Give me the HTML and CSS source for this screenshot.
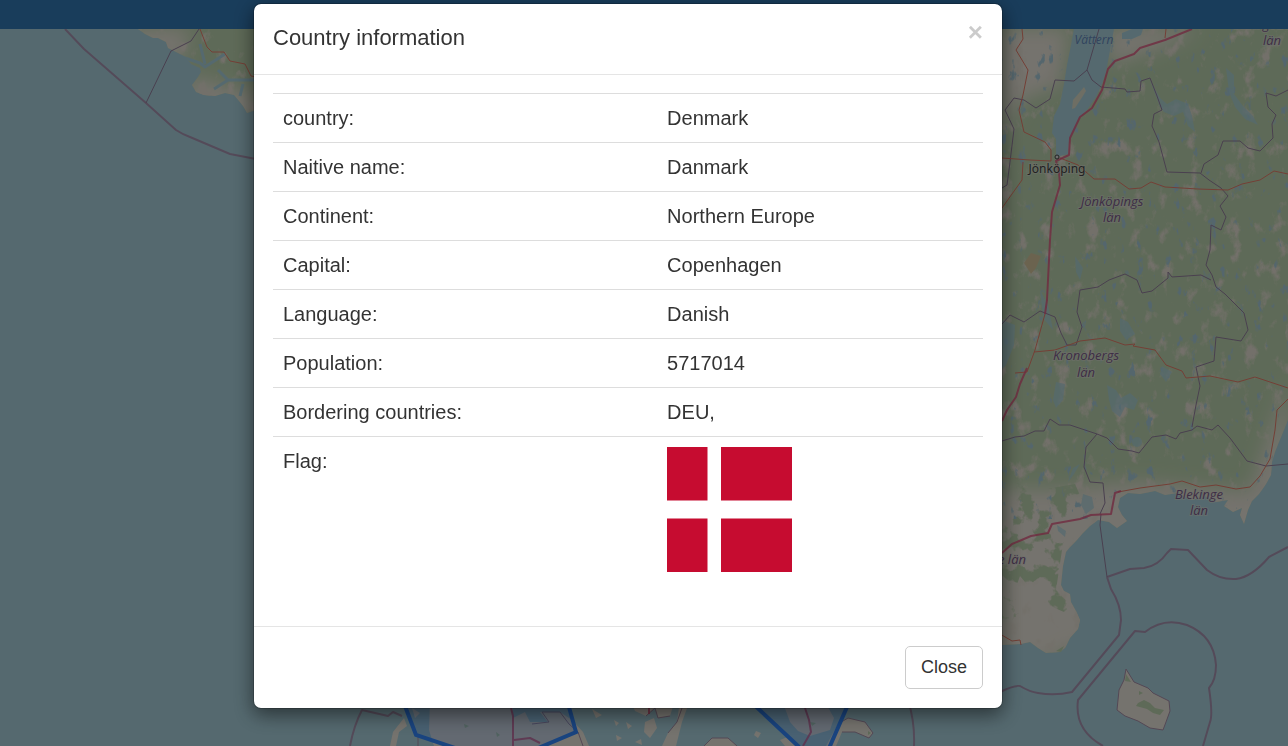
FILE: index.html
```html
<!DOCTYPE html>
<html lang="en">
<head>
<meta charset="utf-8">
<meta name="viewport" content="width=device-width, initial-scale=1">
<title>Country information</title>
<link rel="stylesheet" href="styles.css">
</head>
<body>
<header class="navbar"></header>
<main class="map">
<svg class="map-canvas" viewBox="0 29 1288 717" preserveAspectRatio="xMinYMin slice" aria-hidden="true">
  <defs>
    <filter id="fields" x="0" y="0" width="100%" height="100%" color-interpolation-filters="sRGB">
      <feTurbulence type="fractalNoise" baseFrequency="0.07 0.05" numOctaves="5" seed="4"/>
      <feColorMatrix values="0 0 0 0 .9  0 0 0 0 .88  0 0 0 0 .83  5 0 0 0 -2.9"/>
    </filter>
    <filter id="woods" x="0" y="0" width="100%" height="100%" color-interpolation-filters="sRGB">
      <feTurbulence type="fractalNoise" baseFrequency="0.06" numOctaves="4" seed="11"/>
      <feColorMatrix values="0 0 0 0 .74  0 0 0 0 .83  0 0 0 0 .69  10 0 0 0 -5"/>
    </filter>
    <filter id="lakes" x="0" y="0" width="100%" height="100%" color-interpolation-filters="sRGB">
      <feTurbulence type="fractalNoise" baseFrequency="0.11 0.06" numOctaves="4" seed="23"/>
      <feColorMatrix values="0 0 0 0 .66  0 0 0 0 .8  0 0 0 0 .86  9 0 0 0 -6.100"/>
    </filter>
    <filter id="soften" x="-20%" y="-20%" width="140%" height="140%"><feGaussianBlur stdDeviation="9"/></filter>
    <clipPath id="sweden"><path d="M1000 29H1288V420L1284 430 1279 442 1275 452 1272 462 1271 475 1266 484 1259 494 1252 501 1248 510 1244 524 1240 515 1242 508 1233 512 1224 506 1228 500 1216 502 1205 496 1192 500 1178 493 1165 495 1155 491 1140 494 1128 493 1120 498 1118 507 1122 515 1127 521 1117 528 1109 522 1098 520 1090 526 1083 533 1077 540 1070 547 1066 552 1063 566 1061 585 1064 591 1070 594 1071 602 1076 611 1080 620 1078 629 1070 638 1065 648 1060 652 1046 653 1038 648 1030 642 1021 644 1000 645Z"/></clipPath>
    <clipPath id="norway"><path d="M138 29L145 34 153 38 158 38 166 42 168 48 176 52 186 57 191 64 200 68 201 72 198 77 192 85 196 92 204 95 215 96 225 93 234 95 239 101 243 106 247 113 256 110V29Z"/></clipPath>
    <clipPath id="skane"><path d="M1000 478L1040 490 1075 484 1082 500 1070 520 1062 550 1056 590 1072 606 1064 612 1050 606 1043 590 1030 588 1020 576 1015 590 1020 620 1000 632Z"/></clipPath>
  </defs>

  <rect class="sea" width="1288" height="760"/>

  <g clip-path="url(#sweden)">
    <rect class="forest" x="1000" y="29" width="288" height="630"/>
    <g filter="url(#soften)" class="farmland">
      <path d="M1000 29H1068L1060 85 1020 100 1000 140ZM1108 29H1200L1170 45 1110 65Z"/>
      <path d="M1000 490L1060 490 1105 485 1140 482 1250 492 1288 380V560L1000 680Z"/>
    </g>
    <rect x="1000" y="29" width="288" height="630" filter="url(#fields)"/>
    <g clip-path="url(#skane)"><rect x="1000" y="470" width="90" height="170" filter="url(#woods)"/></g>
    <rect x="1000" y="29" width="288" height="490" filter="url(#lakes)"/>
    <g class="lake">
      <path d="M1074 29H1114L1111 45 1106 72 1102 84 1096 97 1087 110 1079 118 1073 130 1069 142 1068 154 1056 157 1056 139 1052 133 1054 116 1060 104 1064 84 1067 65 1071 45Z"/>
      <path d="M1122 33L1132 29H1143L1141 35 1132 39 1122 39Z"/>
    </g>
    <g class="lake lake-faint">
      <path d="M1150 80L1160 98 1167 104 1176 99 1188 104 1192 116 1195 132 1188 126 1183 112 1174 116 1164 112 1160 107Z"/>
      <path d="M1226 68L1234 75 1234 94 1243 106 1253 116 1258 125 1245 119 1235 107 1229 92Z"/>
      <path d="M1107 385L1116 390 1121 398 1130 393 1138 400 1134 410 1125 407 1120 417 1112 411 1109 400ZM1162 366L1172 372 1166 382 1160 374ZM1120 318L1128 322 1135 334 1126 340 1120 331ZM1002 320L1015 325 1014 345 1006 365 1001 370ZM1040 290L1048 305 1053 330 1043 318ZM1075 256L1083 268 1080 280 1076 272ZM1056 382l9 2-2 16-7 8-3-8z"/>
      <circle cx="1137" cy="442" r="5"/>
      <path d="M1083 494L1092 497 1094 508 1086 514 1081 505ZM1057 525L1066 531 1065 537 1058 531ZM1080 464L1074 474 1068 482 1073 468Z"/>
    </g>
    <path class="shore" d="M1084 87L1086 91 1081 99 1075 108 1072 109 1073 100 1079 93Z"/>
    <path class="heath" d="M1031 253L1041 256 1036 268 1031 274 1024 263Z"/>
  </g>

  <g clip-path="url(#norway)">
    <rect class="forest" x="130" y="29" width="130" height="90"/>
    <path class="farmland" filter="url(#soften)" d="M130 29H190L182 62 130 60ZM190 75L205 80 240 92 256 85V120H185Z"/>
    <rect x="130" y="29" width="130" height="90" filter="url(#fields)"/>
    <path class="fjord" d="M185 58L200 63 205 67 225 54M200 44L205 64M218 70L228 80 254 80M214 89L228 80M240 96L243 84"/>
  </g>

  <g class="farmland">
    <path d="M1126 669L1134 682 1148 688 1153 693 1169 701 1170 711 1166 722 1163 730 1150 728 1138 721 1125 716 1117 710 1119 690 1124 680Z"/>
    <path d="M430 700H512L513 718 525 712 530 722 548 722 540 712 560 712 572 720 583 732 589 746H434L429 730Z"/>
    <path d="M630 700H675L670 716 658 718 655 708 646 716 635 711Z"/>
    <path d="M645 722L654 718 657 728 650 738 644 732ZM680 700H690L682 722 676 746H662L668 733 677 722ZM704 746L712 738 728 738 737 746ZM782 700L790 722 798 731 810 736 830 730 834 718 824 700ZM838 724L848 718 865 722 873 733 869 738 855 732 842 732 836 746H826Z"/>
    <path d="M404 718L407 726 399 732 396 746H390L393 732ZM412 708L420 713 415 718ZM756 731L761 733 758 738 754 735ZM780 740L790 736 798 746H785Z"/>
    <path d="M592 709L602 715 596 718ZM614 720L619 723 616 726ZM616 735L622 738 617 741ZM626 722L632 726 628 729ZM635 742L641 739 642 745Z"/>
  </g>
  <path class="wood-patch" d="M1126 674L1131 682 1125 681ZM1138 703L1144 700 1150 703 1155 708 1164 710 1160 715 1153 713 1147 709 1136 706ZM1139 691L1143 693 1139 695ZM1056 651L1064 646 1061 652ZM464 724l5 2-4 2zM496 732l4 3-3 2zM810 722l6 1-4 3zM868 731l3 2-3 2z"/>
  <path class="coast" d="M1126 669L1134 682 1148 688 1153 693 1169 701 1170 711 1166 722 1163 730 1150 728 1138 721 1125 716 1117 710 1119 690 1124 680ZM583 746L578 732 569 724 560 712 542 712 549 722 532 724M646 716L655 708 658 718 670 716M668 733L677 722 682 708M704 746L712 738 728 738 737 746M838 724L848 718 865 722 873 733 869 738 855 732 842 732M418 746L418 735 412 727"/>

  <g class="boundary-sea">
    <path d="M65 29L84 49 146 103 176 130Q182 134 190 137L230 154 256 159"/>
    <path d="M1107 577L1130 569 1144 568Q1158 566 1167 553L1171 549 1188 550 1207 570Q1220 580 1236 579 1252 577 1269 557L1288 547"/>
    <path d="M1107 577L1111 589Q1121 605 1121 620L1119 635 1072 692Q1055 696 1038 693 1030 692 1020 686 1014 685 1000 692"/>
    <path d="M1103 746Q1074 730 1078 700L1135 631 1145 632Q1164 617 1187 625 1214 636 1216 665 1216 680 1209 688 1213 715 1210 722L1203 746"/>
    <path d="M350 746Q354 725 362 710L388 716 393 712 402 716M908 700Q915 722 914 746"/>
  </g>
  <g class="boundary">
    <path d="M146 103L171 51 191 41 199 29M1101 514L1100 525 1107 577"/>
    <path d="M1099 29L1087 70 1092 80 1101 87 1125 89 1127 92 1140 91 1141 81 1150 78 1157 96 1162 110 1154 114 1152 126 1159 142 1167 172 1200 173 1209 180 1221 188 1228 196 1220 206 1226 217 1221 230 1211 225 1210 250 1206 265 1212 275 1216 287 1225 294 1244 313 1248 330 1241 341 1216 337 1214 361 1196 367 1200 386 1196 405 1192 427M1087 70L1074 81 1055 80 1050 99 1036 108 1024 100 1014 98 1005 110 1014 129 1010 162 1007 185 1002 188M1201 173L1204 164 1218 155 1223 141 1240 141 1248 148 1260 151 1273 138 1272 124 1276 115 1268 107 1266 93 1276 96 1288 90"/>
    <path d="M1002 324L1010 315 1024 322 1040 311 1055 317 1061 333 1067 345 1076 345 1082 327 1077 312 1080 290 1098 287 1109 280 1125 274 1137 280 1142 293 1152 291 1168 278 1168 272 1172 277 1201 275 1211 280"/>
    <path d="M1002 441L1015 437 1024 436 1035 431 1044 431 1050 419 1059 425 1070 425 1097 434 1107 438 1118 449 1132 451 1139 453 1152 437 1166 435 1176 439 1180 433 1192 430 1197 426 1212 430 1218 425 1230 438 1247 461 1266 466 1288 464M1097 434L1086 447 1084 467 1090 482 1103 483 1105 503 1100 514"/>
  </g>
  <g class="road">
    <path d="M1022 29L1023 39 1016 50 1028 70 1023 95 1019 110 1024 132 1045 142 1051 150 1051 161 1030 160 1002 158M1060 158L1078 165 1094 179 1115 179 1129 189 1141 188 1151 182 1165 187 1198 189 1228 190 1242 184 1260 180 1274 171 1288 174"/>
    <path d="M1002 208L1022 180 1023 162M1045 314L1035 350 1027 372 1015 373M1034 352L1055 350 1080 341 1105 338 1125 345 1135 344 1133 346 1155 350 1166 365 1182 371 1186 378 1210 376 1238 382 1255 377 1288 388"/>
    <path d="M1118 492L1140 488 1170 484 1182 481 1200 487 1216 485 1236 489 1250 487 1260 476 1270 459 1275 430 1277 410 1288 399M1000 634L1012 641 1020 640 1021 645M200 29L207 47 212 52 224 52 230 61 245 64 251 76 256 77M1166 29L1165 38"/>
  </g>
  <g class="motorway">
    <path d="M1192 29L1165 40 1140 48 1134 54 1115 61 1108 69 1104 83 1102 90 1092 108 1080 117 1070 138 1069 155 1056 161 1059 172 1060 185 1052 212 1050 240 1047 300 1045 314M1027 368L1020 384 1016 397 1007 410 1002 421"/>
    <path d="M1002 553L1012 544 1031 536 1048 533 1052 524 1080 519 1091 515 1111 514 1115 493 1121 491M511 708L513 716 513 746M514 740L530 738 540 743M805 708L809 720 811 732 803 746M649 708v6"/>
  </g>

  <g class="country">
    <path d="M405 706L416 735 455 748 500 765 543 746 576 732 567 700Z"/>
    <path d="M749 700L798 746 820 770 830 746 850 700Z"/>
  </g>

  <g class="label">
    <text class="label-water" x="1094" y="44">Vättern</text>
    <text x="1272" y="29">Östergötlands</text><text x="1272" y="45">län</text>
    <text x="1112" y="206">Jönköpings</text><text x="1112" y="222">län</text>
    <text x="1086" y="360">Kronobergs</text><text x="1086" y="377">län</text>
    <text x="1199" y="499">Blekinge</text><text x="1199" y="515">län</text>
    <text x="1012" y="564">e län</text>
    <circle class="town" cx="1057" cy="157" r="2"/>
    <text class="label-town" x="1057" y="173">Jönköping</text>
  </g>
</svg>
</main>

<div class="overlay">
  <section class="modal" role="dialog" aria-modal="true" aria-labelledby="modal-title">
    <header class="modal-header">
      <h4 class="modal-title" id="modal-title">Country information</h4>
      <button class="dismiss" type="button" aria-label="Dismiss">×</button>
    </header>
    <div class="modal-body">
      <table class="info">
        <colgroup><col class="info-label"><col></colgroup>
        <tbody>
          <tr><th scope="row">country:</th><td>Denmark</td></tr>
          <tr><th scope="row">Naitive name:</th><td>Danmark</td></tr>
          <tr><th scope="row">Continent:</th><td>Northern Europe</td></tr>
          <tr><th scope="row">Capital:</th><td>Copenhagen</td></tr>
          <tr><th scope="row">Language:</th><td>Danish</td></tr>
          <tr><th scope="row">Population:</th><td>5717014</td></tr>
          <tr><th scope="row">Bordering countries:</th><td>DEU,</td></tr>
          <tr><th scope="row">Flag:</th><td>
            <svg class="flag" viewBox="0 0 125 125" role="img" aria-label="Flag of Denmark">
              <path d="M0 0H40.500V53.500H0ZM54 0H125V53.500H54ZM0 71.500H40.500V125H0ZM54 71.500H125V125H54Z"/>
            </svg>
          </td></tr>
        </tbody>
      </table>
    </div>
    <footer class="modal-footer">
      <button class="button" type="button">Close</button>
    </footer>
  </section>
</div>
</body>
</html>
```
FILE: styles.css
```css
* { box-sizing: border-box; }

body {
  display: flex;
  flex-direction: column;
  height: 100vh;
  margin: 0;
  overflow: hidden;
  color: #333;
  font-family: "Liberation Sans", Arial, sans-serif;
  font-size: 20px;
  line-height: 28px;
}

.navbar { flex: none; height: 29px; background: #337ab7; }

.map { flex: 1; min-height: 0; }
.map-canvas { display: block; width: 100%; height: 100%; }

.sea { fill: #aad3df; }
.forest { fill: #bdd5b0; }
.farmland { fill: #ebe6dc; }
.wood-patch { fill: #bdd5b0; }
.lake { fill: #aad3df; }
.lake-faint { opacity: .7; }
.shore { fill: #dcdcc8; }
.heath { fill: #d6c79f; }
.fjord { fill: none; stroke: #aad3df; stroke-width: 3; }
.coast { fill: none; stroke: #a890aa; stroke-width: 1; }
.boundary-sea { fill: none; stroke: #a995b2; stroke-width: 2; stroke-linejoin: round; }
.boundary { fill: none; stroke: #94809f; stroke-width: 1; stroke-linejoin: round; }
.road { fill: none; stroke: #e87f6c; stroke-width: 1; stroke-linejoin: round; }
.motorway { fill: none; stroke: #e0557f; stroke-width: 2; stroke-linejoin: round; opacity: .8; }
.country path { fill: #38f; fill-opacity: .2; stroke: #38f; stroke-width: 4; }

.label text {
  fill: #7d5c8c;
  stroke: #dcdfd4;
  stroke-opacity: .6;
  stroke-width: 2;
  paint-order: stroke;
  font: italic 400 13px "Open Sans", "Noto Sans", sans-serif;
  text-anchor: middle;
}
.label .label-water { fill: #6488bd; stroke: none; font-size: 12px; }
.label .label-town { fill: #444; font-family: "Noto Sans", sans-serif; font-size: 12px; font-style: normal; }
.town { fill: #ddd; stroke: #444; stroke-width: 1; }

.overlay {
  position: fixed;
  inset: 0;
  display: flex;
  align-items: flex-start;
  justify-content: center;
  padding: 3px 32px 3px 0;
  background: rgba(0, 0, 0, .5);
}

.modal {
  width: 100%;
  max-width: 750px;
  border: 1px solid rgba(0, 0, 0, .2);
  border-radius: 8px;
  background: #fff;
  background-clip: padding-box;
  box-shadow: 0 6px 19px rgba(0, 0, 0, .5);
}

.modal-header {
  display: flex;
  align-items: flex-start;
  justify-content: space-between;
  padding: 18px 19px 20px;
  border-bottom: 1px solid #e5e5e5;
}

.modal-title { margin: 0; font-size: 22px; font-weight: 400; line-height: 32px; }

.dismiss {
  padding: 0;
  border: 0;
  background: none;
  color: #000;
  font: 700 26px/20px "Liberation Sans", Arial, sans-serif;
  opacity: .2;
  cursor: pointer;
}

.modal-body { padding: 18px 19px; }

.info {
  width: 100%;
  margin-bottom: 26px;
  border-collapse: collapse;
  table-layout: fixed;
}
.info th, .info td {
  padding: 10px;
  border-top: 1px solid #ddd;
  font-weight: 400;
  text-align: left;
  vertical-align: top;
}
.info-label { width: 54.1%; }

.flag { display: block; width: 125px; height: 125px; fill: #c60c30; }

.modal-footer {
  display: flex;
  justify-content: flex-end;
  padding: 19px;
  border-top: 1px solid #e5e5e5;
}

.button {
  padding: 7px 15px;
  border: 1px solid #ccc;
  border-radius: 5px;
  background: #fff;
  color: #333;
  font: 18px/27px "Liberation Sans", Arial, sans-serif;
  cursor: pointer;
}
```
